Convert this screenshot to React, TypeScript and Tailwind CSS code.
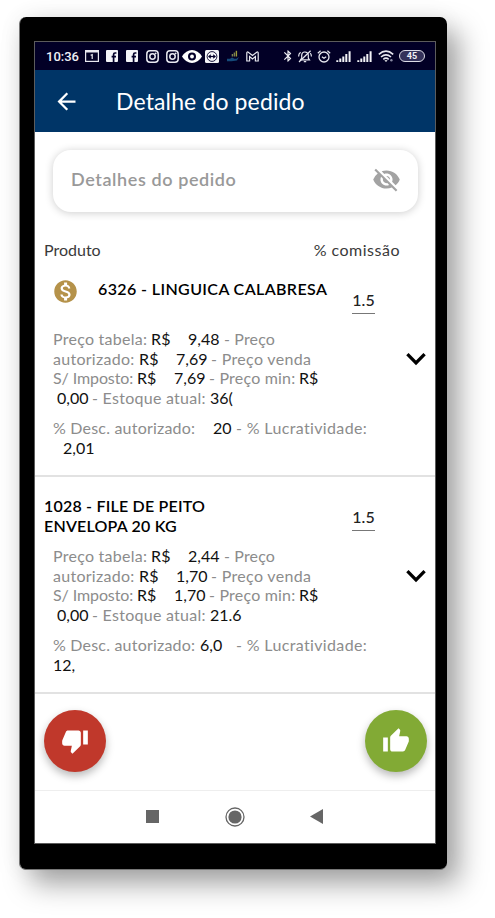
import clsx from 'clsx'
import type { ReactNode } from 'react'
import {
  MdArrowBack,
  MdBluetooth,
  MdMonetizationOn,
  MdThumbDown,
  MdThumbUp,
  MdVisibilityOff,
} from 'react-icons/md'

interface Segment {
  text: string
  width: string
  strong?: boolean
  tracking?: string
}

interface Product {
  id: string
  title: string[]
  titleTracking: string
  commission: string
  hasCoin?: boolean
  prices: Segment[][]
  margins: Segment[][]
}

const PRODUCTS: Product[] = [
  {
    id: '6326',
    title: ['6326 - LINGUICA CALABRESA'],
    titleTracking: 'tracking-[0.39px]',
    commission: '1.5',
    hasCoin: true,
    prices: [
      [
        { text: 'Preço tabela:', width: 'w-[98px]', tracking: 'tracking-[0.25px]' },
        { text: 'R$', width: 'w-[37px]', strong: true, tracking: 'tracking-[0.25px]' },
        { text: '9,48', width: 'w-[36px]', strong: true },
        { text: '- Preço', width: 'w-[60px]', tracking: 'tracking-[0.15px]' },
      ],
      [
        { text: 'autorizado:', width: 'w-[86px]', tracking: 'tracking-[0.27px]' },
        { text: 'R$', width: 'w-[37px]', strong: true, tracking: 'tracking-[0.25px]' },
        { text: '7,69', width: 'w-[35px]', strong: true },
        { text: '- Preço venda', width: 'w-[110px]', tracking: 'tracking-[0.33px]' },
      ],
      [
        { text: 'S/ Imposto:', width: 'w-[84px]', tracking: 'tracking-[-0.1px]' },
        { text: 'R$', width: 'w-[37px]', strong: true },
        { text: '7,69', width: 'w-[35px]', strong: true },
        { text: '- Preço min:', width: 'w-[90px]', tracking: 'tracking-[0.2px]' },
        { text: 'R$', width: 'w-[30px]', strong: true },
      ],
      [
        { text: '', width: 'w-[4px]' },
        { text: '0,00', width: 'w-[35px]', strong: true },
        { text: '- Estoque atual:', width: 'w-[118px]', tracking: 'tracking-[0.27px]' },
        { text: '36(', width: 'w-[26px]', strong: true },
      ],
    ],
    margins: [
      [
        { text: '% Desc. autorizado:', width: 'w-[160px]', tracking: 'tracking-[0.2px]' },
        { text: '20', width: 'w-[23px]', strong: true },
        { text: '- % Lucratividade:', width: 'w-[140px]', tracking: 'tracking-[0.35px]' },
      ],
      [
        { text: '', width: 'w-[10px]' },
        { text: '2,01', width: 'w-[40px]', strong: true },
      ],
    ],
  },
  {
    id: '1028',
    title: ['1028 - FILE DE PEITO', 'ENVELOPA 20 KG'],
    titleTracking: 'tracking-[0.2px]',
    commission: '1.5',
    prices: [
      [
        { text: 'Preço tabela:', width: 'w-[98px]', tracking: 'tracking-[0.25px]' },
        { text: 'R$', width: 'w-[37px]', strong: true, tracking: 'tracking-[0.25px]' },
        { text: '2,44', width: 'w-[36px]', strong: true },
        { text: '- Preço', width: 'w-[60px]', tracking: 'tracking-[0.15px]' },
      ],
      [
        { text: 'autorizado:', width: 'w-[86px]', tracking: 'tracking-[0.27px]' },
        { text: 'R$', width: 'w-[37px]', strong: true, tracking: 'tracking-[0.25px]' },
        { text: '1,70', width: 'w-[35px]', strong: true },
        { text: '- Preço venda', width: 'w-[110px]', tracking: 'tracking-[0.33px]' },
      ],
      [
        { text: 'S/ Imposto:', width: 'w-[84px]', tracking: 'tracking-[-0.1px]' },
        { text: 'R$', width: 'w-[37px]', strong: true },
        { text: '1,70', width: 'w-[35px]', strong: true },
        { text: '- Preço min:', width: 'w-[90px]', tracking: 'tracking-[0.2px]' },
        { text: 'R$', width: 'w-[30px]', strong: true },
      ],
      [
        { text: '', width: 'w-[4px]' },
        { text: '0,00', width: 'w-[35px]', strong: true },
        { text: '- Estoque atual:', width: 'w-[118px]', tracking: 'tracking-[0.27px]' },
        { text: '21.6', width: 'w-[36px]', strong: true },
      ],
    ],
    margins: [
      [
        { text: '% Desc. autorizado:', width: 'w-[147px]', tracking: 'tracking-[0.2px]' },
        { text: '6,0', width: 'w-[36px]', strong: true },
        { text: '- % Lucratividade:', width: 'w-[140px]', tracking: 'tracking-[0.35px]' },
      ],
      [{ text: '12,', width: 'w-[40px]', strong: true }],
    ],
  },
]

function Glyph({ className, box, children }: { className: string; box: string; children: ReactNode }) {
  return (
    <svg viewBox={box} className={clsx('shrink-0', className)} fill="none" stroke="#e8e8f0">
      {children}
    </svg>
  )
}

function Facebook({ className }: { className?: string }) {
  return (
    <Glyph box="0 0 12 12" className={clsx('h-3 w-3', className)}>
      <rect width="12" height="12" rx="1" fill="#f4f4f8" stroke="none" />
      <path d="M7.6 12V4.4Q7.6 3 9 3H10.4M5.6 6.7h4.4" stroke="#04002a" strokeWidth="1.7" />
    </Glyph>
  )
}

function Instagram({ className }: { className?: string }) {
  return (
    <Glyph box="0 0 13 13" className={clsx('h-[13px] w-[13px]', className)}>
      <rect x=".8" y=".8" width="11.4" height="11.4" rx="3.2" strokeWidth="1.5" />
      <circle cx="6.5" cy="6.5" r="2.7" strokeWidth="1.5" />
      <circle cx="9.7" cy="3.3" r=".9" fill="#e8e8f0" stroke="none" />
    </Glyph>
  )
}

function Signal({ className }: { className?: string }) {
  return (
    <Glyph box="0 0 16 11" className={clsx('h-[11px] w-4', className)}>
      <path
        d="M1.3 11V9.2M4.3 11V7.6M7.3 11V5.4M10.3 11V3M13.6 11V0.3"
        stroke="#f2f2f6"
        strokeWidth="2"
      />
    </Glyph>
  )
}

function StatusBar() {
  return (
    <div className="flex h-7 items-center bg-[#020026] pl-[11px] font-[Roboto,sans-serif] text-[#f0f0f5]">
      <span className="w-[39px] text-[13px] font-medium leading-none">10:36</span>
      <Glyph box="0 0 14 12" className="h-3 w-[14px]">
        <rect x=".6" y=".6" width="12.8" height="10.8" strokeWidth="1.2" />
        <path d="M0 1.5h14" strokeWidth="2" />
        <path d="M5.6 5.2 7.2 4.6V9" strokeWidth="1.2" />
      </Glyph>
      <Facebook className="ml-[7px]" />
      <Facebook className="ml-2" />
      <Instagram className="ml-2" />
      <Instagram className="ml-[7px]" />
      <Glyph box="0 0 20 13" className="ml-[3px] h-[13px] w-5">
        <path d="M0 6.5Q4 0 10 0T20 6.5Q16 13 10 13T0 6.5Z" fill="#fff" stroke="none" />
        <circle cx="10" cy="6.5" r="4" fill="#04002a" stroke="none" />
        <circle cx="10" cy="6.5" r="1.9" fill="#fff" stroke="none" />
      </Glyph>
      <Glyph box="0 0 14 13" className="ml-[3px] h-[13px] w-[14px]">
        <rect width="14" height="13" rx="1.5" fill="#f4f4f8" stroke="none" />
        <circle cx="7" cy="6.5" r="4.9" stroke="#04002a" strokeWidth=".9" />
        <path d="M4.4 6.5h5.2" stroke="#04002a" strokeWidth="1.2" />
        <path d="M5.8 4.3v4.4L3 6.5ZM8.2 4.3v4.4L11 6.5Z" fill="#04002a" stroke="none" />
      </Glyph>
      <Glyph box="0 0 12 12" className="ml-2 h-3 w-3">
        <path d="M5.4 6.5V4M7.4 6.5V2.6" stroke="#7b8150" strokeWidth="1.4" />
        <path d="M9.4 6.5V.8" stroke="#9c9c3a" strokeWidth="1.4" />
        <path d="M0 8.8h3L5 7.6l2.4 1.2h2L12 7l-2 3.6-5.6.6H0Z" fill="#154a7a" stroke="none" />
      </Glyph>
      <Glyph box="0 0 13 11" className="ml-[7px] h-[11px] w-[13px]">
        <path
          d="M.8 10V2Q.8.8 2 1L6.5 4.5 11 1q1.2-.2 1.2 1v8H9.4V5.6L6.5 7.9 3.6 5.6V10Z"
          strokeWidth="1.2"
        />
      </Glyph>
      <MdBluetooth className="ml-[22px] h-[14px] w-[14px] shrink-0" />
      <Glyph box="0 0 14 13" className="ml-[3px] h-[13px] w-[14px]">
        <path d="M2.5 9.8h9L10.3 8V5Q10 2.2 7 2T3.7 5v3ZM5.8 11.6h2.4" strokeWidth="1.2" />
        <path d="M1 12 12.6.8M.6 6.5Q.6 3.6 2.6 2.2M13.4 6.5Q13.4 4.6 12.3 3.2" strokeWidth="1.2" />
      </Glyph>
      <Glyph box="0 0 14 13" className="ml-[5px] h-[13px] w-[14px]">
        <circle cx="7" cy="7" r="5" strokeWidth="1.3" />
        <path d="M4.9 6.7 7 8.3l2.2-1.6M.8 3.2 3.6.8M13.2 3.2 10.4.8" strokeWidth="1.2" />
      </Glyph>
      <Signal className="ml-[5px]" />
      <Signal className="ml-[5px]" />
      <Glyph box="0 0 16 12" className="ml-[5px] h-3 w-4">
        <path d="M.8 4.4Q8-2 15.2 4.4M3 7q5-4.2 10 0M5.3 9.3q2.7-2.2 5.4 0" strokeWidth="1.6" />
        <path d="m8 12-1.6-1.7h3.2Z" fill="#fff" stroke="none" />
        <circle cx="13.4" cy="10.2" r="1.2" fill="#8b8ba5" stroke="none" />
      </Glyph>
      <span className="ml-[5px] flex h-3 w-[26px] items-center justify-center rounded-full border border-[#dcdce6] bg-[#34325a] text-[9px] font-bold leading-none">
        45
      </span>
    </div>
  )
}

function Line({ segments }: { segments: Segment[] }) {
  return (
    <div className="flex h-[19.5px] whitespace-pre leading-[19.5px]">
      {segments.map((s, i) => (
        <span
          key={i}
          className={clsx('shrink-0', s.width, s.tracking, s.strong ? 'text-[#111]' : 'text-[#8c8c8c]')}
        >
          {s.text}
        </span>
      ))}
    </div>
  )
}

function ProductRow({ product }: { product: Product }) {
  return (
    <div className="flex h-[217px] border-b-2 border-[#e2e2e2]">
      <div className="w-[308px] pl-[9px] pt-[19px]">
        <div className="flex h-[50px]">
          {product.hasCoin && (
            <MdMonetizationOn className="-mt-px ml-[8px] mr-[19px] h-[27px] w-[27px] shrink-0 text-[#b5924a]" />
          )}
          <div className={clsx('whitespace-nowrap font-semibold leading-[19.5px] text-black', product.titleTracking)}>
            {product.title.map((t) => (
              <p key={t}>{t}</p>
            ))}
          </div>
        </div>
        <div className="pl-[9px]">
          {product.prices.map((segments, i) => (
            <Line key={i} segments={segments} />
          ))}
          <div className="mt-[11px]">
            {product.margins.map((segments, i) => (
              <Line key={i} segments={segments} />
            ))}
          </div>
        </div>
      </div>
      <div className="ml-[9px] w-[23px] pt-[30px]">
        <p className="h-6 border-b border-[#777] text-center font-medium leading-5 text-[#222]">
          {product.commission}
        </p>
      </div>
      <svg viewBox="0 0 20 14" className="ml-[31px] mt-[92px] h-[14px] w-5" fill="none" stroke="#000" strokeWidth="3.3">
        <path d="m1.4 2.2 8.6 8.6 8.6-8.6" />
      </svg>
    </div>
  )
}

export default function App() {
  return (
    <div className="h-[918px] w-[495px] overflow-hidden bg-white pl-[19px] pt-[17px] font-[Lato,sans-serif] text-[16px]">
      <div className="h-[853px] w-[428px] rounded-[7px] border-b border-l border-[#777] bg-black pl-[14px] pt-6 shadow-[0_0_24px_rgba(0,0,0,0.06),12px_14px_28px_rgba(0,0,0,0.36)]">
        <div className="flex h-[803px] w-[402px] flex-col border border-[#5c5c5c] bg-white">
          <StatusBar />
          <header className="flex h-[62px] items-center bg-[#003567] text-white">
            <MdArrowBack className="ml-[18px] h-[27px] w-[27px]" />
            <h1 className="ml-[36px] text-[23px] tracking-[0.13px]">Detalhe do pedido</h1>
          </header>

          <main className="h-[658px]">
            <div className="ml-[18px] mt-[18px] flex h-[62px] w-[365px] items-center justify-between rounded-[18px] bg-white pl-[18px] pr-[17px] shadow-[0_1px_8px_rgba(0,0,0,0.2)]">
              <span className="-mt-1 text-[18px] font-semibold tracking-[0.6px] text-[#999]">Detalhes do pedido</span>
              <MdVisibilityOff className="-mt-[3px] h-[29px] w-[29px] text-[#a3a3a3]" />
            </div>
            <div className="flex h-12 items-end justify-between pl-[9px] pr-[35px] leading-5 text-[#3a3a3a]">
              <span>Produto</span>
              <span className="tracking-[0.5px]">% comissão</span>
            </div>
            {PRODUCTS.map((p) => (
              <ProductRow key={p.id} product={p} />
            ))}
            <div className="flex justify-between pl-[9px] pr-2 pt-4">
              <button className="flex h-[62px] w-[62px] items-center justify-center rounded-full bg-[#c0382b] text-white shadow-[0_4px_8px_rgba(0,0,0,0.28)]">
                <MdThumbDown className="h-7 w-7" />
              </button>
              <button className="flex h-[62px] w-[62px] items-center justify-center rounded-full bg-[#82aa35] text-white shadow-[0_4px_8px_rgba(0,0,0,0.28)]">
                <MdThumbUp className="h-7 w-7" />
              </button>
            </div>
          </main>

          <nav className="flex h-[52px] items-center border-t border-[#eee] pl-[111px]">
            <span className="h-[13px] w-[13px] bg-[#666]" />
            <svg viewBox="0 0 20 20" className="ml-[66px] h-5 w-5">
              <circle cx="10" cy="10" r="9" fill="none" stroke="#666" strokeWidth="1.3" />
              <circle cx="10" cy="10" r="6.6" fill="#666" />
            </svg>
            <svg viewBox="0 0 13 15" className="ml-[65px] h-[15px] w-[13px]">
              <path d="M13 0v15L0 7.5Z" fill="#666" />
            </svg>
          </nav>
        </div>
      </div>
    </div>
  )
}
